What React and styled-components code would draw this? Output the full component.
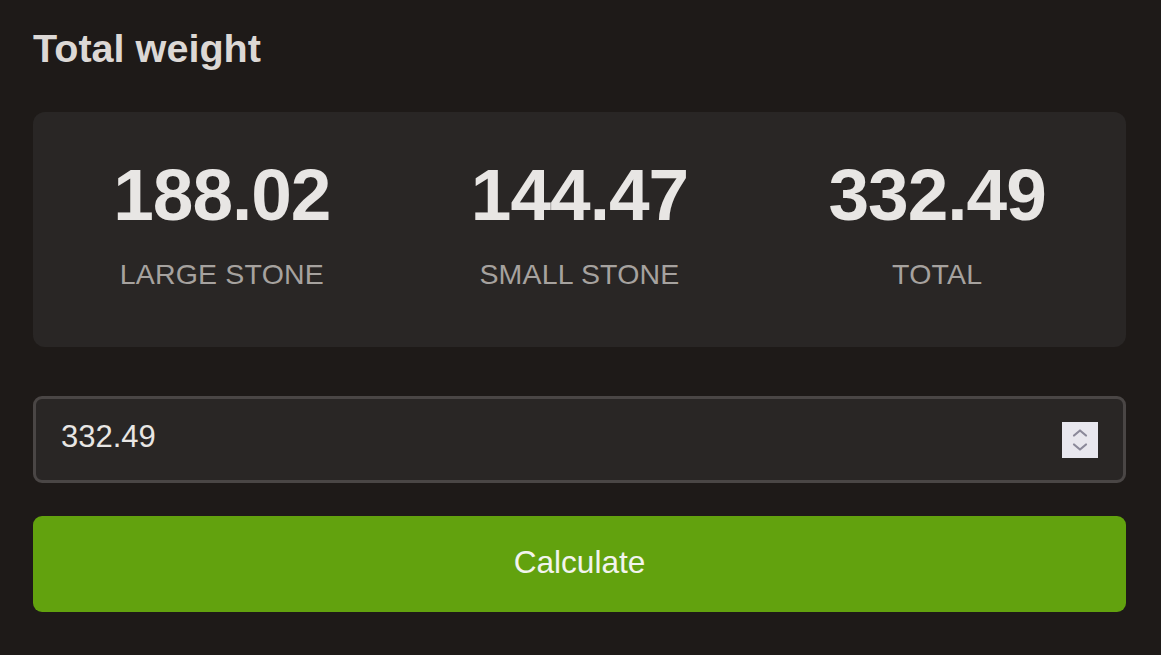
import React from "react";
import styled, { createGlobalStyle } from "styled-components";

const Global = createGlobalStyle`
  html, body { margin: 0; padding: 0; background: #1e1a18; }
  body { font-family: "Liberation Sans", Arial, sans-serif; }
`;

const Page = styled.div`
  width: 1161px;
  height: 655px;
  box-sizing: border-box;
  padding: 24px 35px 0 33px;
  display: flex;
  flex-direction: column;
`;

const Title = styled.h1`
  margin: 0;
  font-size: 39.6px;
  line-height: 48px;
  font-weight: 700;
  color: #dcd8d5;
`;

const StatsCard = styled.div`
  margin-top: 40px;
  height: 235px;
  box-sizing: border-box;
  background: #292625;
  border-radius: 12px;
  padding: 38px 10px 0;
  display: grid;
  grid-template-columns: repeat(3, 1fr);
`;

const Stat = styled.div`
  display: flex;
  flex-direction: column;
  align-items: center;
`;

const Value = styled.div`
  font-size: 73px;
  line-height: 90px;
  font-weight: 700;
  letter-spacing: -1px;
  color: #e8e6e4;
`;

const Label = styled.div`
  margin-top: 17px;
  font-size: 28.5px;
  line-height: 34px;
  color: #a6a29f;
  text-transform: uppercase;
  letter-spacing: 0.2px;
`;

const InputBox = styled.div`
  margin-top: 49px;
  height: 87px;
  box-sizing: border-box;
  border: 3px solid #4a4645;
  border-radius: 9px;
  background: #292625;
  display: flex;
  align-items: center;
  padding: 0 25px 0 25px;
  gap: 12px;
`;

const Field = styled.input`
  flex: 1;
  min-width: 0;
  border: none;
  outline: none;
  background: transparent;
  color: #e8e6e4;
  font-family: "Liberation Sans", Arial, sans-serif;
  font-size: 31px;
  padding: 0;
  margin-top: -6px;
`;

const Spinner = styled.div`
  width: 36px;
  height: 36px;
  background: #e8e7ee;
  display: flex;
  align-items: center;
  justify-content: center;
`;

const Button = styled.button`
  margin-top: 33px;
  height: 96px;
  border: none;
  border-radius: 9px;
  background: #62a20e;
  color: #f2f4ee;
  font-family: "Liberation Sans", Arial, sans-serif;
  font-size: 31.6px;
  padding: 0 0 4px;
  cursor: pointer;
`;

const stats = [
  { value: "188.02", label: "Large stone" },
  { value: "144.47", label: "Small stone" },
  { value: "332.49", label: "Total" },
];

export default function App() {
  return (
    <>
      <Global />
      <Page>
        <Title>Total weight</Title>
        <StatsCard>
          {stats.map((s) => (
            <Stat key={s.label}>
              <Value>{s.value}</Value>
              <Label>{s.label}</Label>
            </Stat>
          ))}
        </StatsCard>
        <InputBox>
          <Field type="text" defaultValue="332.49" readOnly />
          <Spinner>
            <svg width="36" height="36" viewBox="0 0 36 36" fill="none">
              <path d="M12 13.5 L18 8.5 L24 13.5" stroke="#8b899a" strokeWidth="2.2" strokeLinecap="round" strokeLinejoin="round" />
              <path d="M12 22.5 L18 27.5 L24 22.5" stroke="#8b899a" strokeWidth="2.2" strokeLinecap="round" strokeLinejoin="round" />
            </svg>
          </Spinner>
        </InputBox>
        <Button>Calculate</Button>
      </Page>
    </>
  );
}
